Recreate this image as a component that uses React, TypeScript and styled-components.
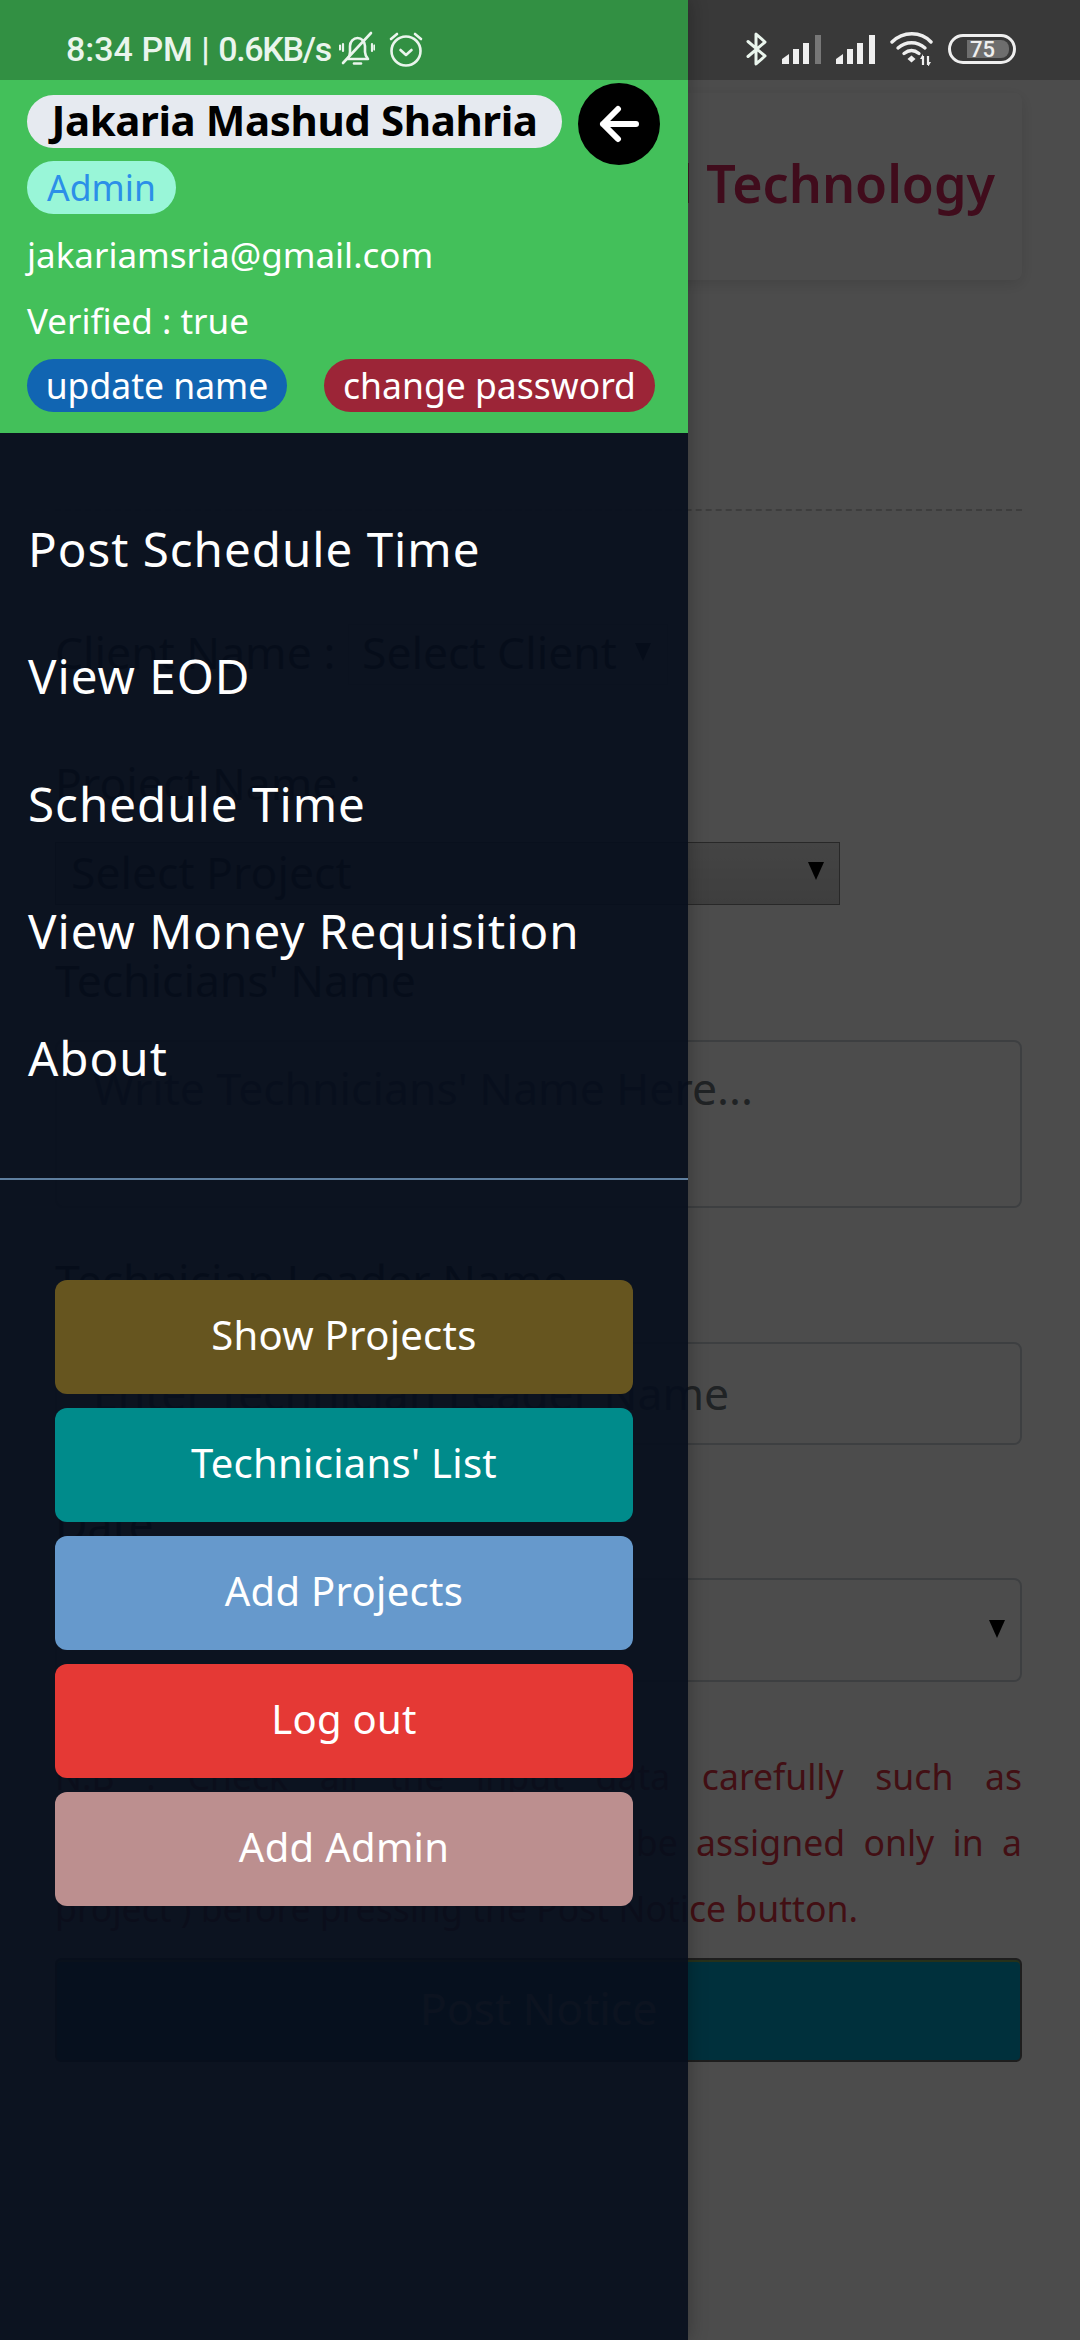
import React from "react";
import styled, { createGlobalStyle } from "styled-components";

const GlobalStyle = createGlobalStyle`
  html, body {
    margin: 0;
    padding: 0;
    background: #4c4c4c;
  }
  * {
    box-sizing: border-box;
  }
`;

const FONT = `"Noto Sans", "Open Sans", sans-serif`;

const Screen = styled.div`
  position: relative;
  width: 1080px;
  height: 2340px;
  overflow: hidden;
  font-family: ${FONT};
  background: #fff;
`;

/* page behind the drawer */
const Page = styled.main`
  padding: 93px 58px 0 55px;
  height: 100%;
  color: #212529;
`;

const TitleCard = styled.div`
  height: 187px;
  display: flex;
  align-items: center;
  justify-content: flex-end;
  padding-right: 27px;
  padding-bottom: 8px;
  border-radius: 8px;
  box-shadow: 0 4px 16px rgba(0, 0, 0, 0.12);
  font-size: 52px;
  font-weight: 600;
  color: #d6285f;
`;

const Dashed = styled.hr`
  margin: 229px 0 0;
  border: 0;
  border-top: 2px dashed #ccc;
`;

const ClientRow = styled.div`
  margin-top: 113px;
  display: flex;
  align-items: center;
  height: 61px;
`;

const Label = styled.div`
  font-size: 44.5px;
  line-height: 60px;
  white-space: nowrap;
`;

const ClientLabel = styled(Label)`
  flex: 0 0 293px;
  padding-bottom: 6px;
`;

const SmallSelect = styled.div`
  width: 320px;
  height: 61px;
  padding: 0 16px 6px 13px;
  display: flex;
  align-items: center;
  justify-content: space-between;
  border: 1px solid #ddd;
  font-size: 44.5px;
  white-space: nowrap;
`;

const Caret = styled.span`
  flex: none;
  width: 0;
  height: 0;
  border-left: 8px solid transparent;
  border-right: 8px solid transparent;
  border-top: 18px solid #000;
`;

const LabelBlock = styled(Label)<{ $top: number }>`
  margin-top: ${(p) => p.$top}px;
`;

const GreySelect = styled.div`
  margin-top: 29px;
  width: 785px;
  height: 63px;
  padding: 0 15px 5px;
  display: flex;
  align-items: center;
  justify-content: space-between;
  border: 1px solid #888;
  background: linear-gradient(#e4e4e4, #d0d0d0);
  font-size: 44.5px;
`;

const Field = styled.div<{ $h: number; $top: number }>`
  margin-top: ${(p) => p.$top}px;
  height: ${(p) => p.$h}px;
  padding: 0 15px 3px 36px;
  display: flex;
  align-items: center;
  justify-content: space-between;
  border: 2px solid #ced4da;
  border-radius: 8px;
  font-size: 44.5px;
  color: #6c757d;
  white-space: nowrap;
`;

const TextArea = styled(Field)`
  align-items: flex-start;
  padding-top: 15px;
`;

const Note = styled.p`
  margin: 61px 0 0;
  font-size: 35.6px;
  line-height: 66px;
  text-align: justify;
  color: #dc3545;
`;

const PostButton = styled.div`
  margin-top: 17px;
  height: 104px;
  padding-bottom: 5px;
  display: flex;
  align-items: center;
  justify-content: center;
  border-radius: 6px;
  border: 2px solid #666;
  box-shadow: inset 0 2px 0 #7fa35c;
  background: #00a0c8;
  color: #fff;
  font-size: 44.5px;
`;

const Scrim = styled.div`
  position: absolute;
  inset: 0;
  background: rgba(0, 0, 0, 0.7);
`;

/* status bar lies over drawer and page */
const StatusBar = styled.div`
  position: absolute;
  top: 0;
  left: 0;
  right: 0;
  height: 80px;
  z-index: 3;
  padding: 18px 64px 0 66px;
  display: flex;
  align-items: center;
  justify-content: space-between;
  background: rgba(0, 0, 0, 0.25);
  color: #eaf5ed;
`;

const StatusGroup = styled.div<{ $gap: number }>`
  display: flex;
  align-items: center;
  gap: ${(p) => p.$gap}px;
`;

const StatusText = styled.span`
  margin-right: -6px;
  font-family: Roboto, sans-serif;
  font-size: 34px;
  font-weight: 500;
  white-space: nowrap;
`;

const Speed = styled.span`
  letter-spacing: -1.3px;
`;

const Drawer = styled.aside`
  position: absolute;
  top: 0;
  left: 0;
  bottom: 0;
  width: 688px;
  z-index: 2;
  background: rgba(6, 14, 28, 0.92);
  box-shadow: 0 0 18px rgba(0, 0, 0, 0.3);
  color: #fff;
`;

const Profile = styled.header`
  position: relative;
  height: 433px;
  padding: 95px 0 0 27px;
  background: #43c05a;
`;

const Pill = styled.span<{ $bg: string; $fg: string; $w: number }>`
  display: inline-flex;
  align-items: center;
  justify-content: center;
  width: ${(p) => p.$w}px;
  height: 53px;
  padding-bottom: 2px;
  border-radius: 27px;
  background: ${(p) => p.$bg};
  color: ${(p) => p.$fg};
  font-size: 35.5px;
  white-space: nowrap;
`;

const NamePill = styled(Pill)`
  padding-bottom: 4px;
  font-size: 42px;
  font-weight: 700;
  letter-spacing: -0.4px;
`;

const RoleRow = styled.div`
  margin-top: 13px;
  display: flex;
`;

const BackButton = styled.button`
  position: absolute;
  top: 83px;
  left: 578px;
  width: 82px;
  height: 82px;
  padding: 0;
  display: flex;
  align-items: center;
  justify-content: center;
  border: 0;
  border-radius: 50%;
  background: #000;
`;

const ProfileLine = styled.div<{ $top: number }>`
  margin-top: ${(p) => p.$top}px;
  font-size: 35px;
  line-height: 48px;
  color: #fff;
`;

const ProfileActions = styled.div`
  margin-top: 14px;
  display: flex;
  gap: 37px;
`;

const Menu = styled.nav`
  height: 747px;
  padding-top: 52px;
  border-bottom: 2px solid #5f7f9f;
`;

const MenuItem = styled.div`
  height: 127.3px;
  display: flex;
  align-items: center;
  padding-left: 28px;
  font-size: 47.5px;
  letter-spacing: 1px;
  color: #fff;
`;

const ActionList = styled.div`
  padding: 100px 55px 0;
  display: flex;
  flex-direction: column;
  gap: 14px;
`;

const ActionButton = styled.div<{ $bg: string }>`
  height: 114px;
  padding-bottom: 6px;
  display: flex;
  align-items: center;
  justify-content: center;
  border-radius: 12px;
  background: ${(p) => p.$bg};
  color: #fff;
  font-size: 40px;
  letter-spacing: 0.3px;
`;

const BellOff = () => (
  <svg width="36" height="36" viewBox="0 0 36 36" fill="none" stroke="currentColor" strokeWidth="2.6" strokeLinecap="round" strokeLinejoin="round">
    <path d="M9 28h20c-2-2.500-3-4-3-7v-6c0-4.500-3.200-8-7.500-8C14.500 7 11 10.500 11 15v6c0 3-.8 4.500-2 7Z" />
    <path d="M15 32.500h7" />
    <path d="M4 13v7M1 14.500v4M33 13v7M35.500 14.500v4" strokeWidth="2.2" />
    <path d="M4 32 32 2" />
  </svg>
);

const AlarmClock = () => (
  <svg width="34" height="36" viewBox="0 0 34 36" fill="none" stroke="currentColor" strokeWidth="2.6" strokeLinecap="round" strokeLinejoin="round">
    <circle cx="17" cy="20" r="14.500" />
    <path d="M11.500 19l5.500 5 5.500-5" />
    <path d="M2 8l6-5M32 8l-6-5" />
  </svg>
);

const Bluetooth = () => (
  <svg width="22" height="34" viewBox="0 0 22 34" fill="none" stroke="currentColor" strokeWidth="3" strokeLinecap="round" strokeLinejoin="round">
    <path d="M2 9.500 19 24 10 32V2l9 8L2 24.500" />
  </svg>
);

const Signal = ({ last }: { last: string }) => (
  <svg width="40" height="29" viewBox="0 0 40 29" fill="#efefef">
    <path d="M0 29V24l7-5v10Z" />
    <rect x="11" y="14" width="6" height="15" />
    <rect x="21" y="8" width="6" height="21" />
    <rect x="33" y="0" width="6" height="29" fill={last} />
  </svg>
);

const Wifi = () => (
  <svg width="44" height="34" viewBox="0 0 44 34" fill="none" stroke="#efefef" strokeWidth="3.4" strokeLinecap="round">
    <path d="M2 10C13 -1 31 -1 41 10" />
    <path d="M8 16c8-7 19-7 27 0" />
    <path d="M14 21.500c5-4 10-4 15 0" />
    <path d="M21.500 23.500l4 3.500-4 3.500-4-3.500Z" fill="#efefef" stroke="none" />
    <path d="M33 24v9M38 24v9" strokeWidth="2.200" strokeLinecap="butt" />
    <path d="M33 22l-3 5h3ZM38 35l3-5h-3Z" fill="#efefef" stroke="none" />
  </svg>
);

const BatteryFrame = styled.div`
  width: 68px;
  height: 30px;
  padding: 3px 4px 3px 16px;
  border: 3px solid #efefef;
  border-radius: 15px;
`;

const BatteryFill = styled.div`
  width: 100%;
  height: 100%;
  padding-left: 3px;
  display: flex;
  align-items: center;
  border-radius: 0 8px 8px 0;
  background: #6e6e6e;
  font-family: Roboto, sans-serif;
  font-size: 22px;
  font-weight: 500;
  color: #efefef;
`;

const menuItems = ["Post Schedule Time", "View EOD", "Schedule Time", "View Money Requisition", "About"];

const actions = [
  { label: "Show Projects", color: "#66551f" },
  { label: "Technicians' List", color: "#008b8b" },
  { label: "Add Projects", color: "#6699cc" },
  { label: "Log out", color: "#e53935" },
  { label: "Add Admin", color: "#bc8f8f" },
];

const App: React.FC = () => {
  return (
    <Screen>
      <GlobalStyle />
      <Page>
        <TitleCard>and Technology</TitleCard>
        <Dashed />
        <ClientRow>
          <ClientLabel>Client Name :</ClientLabel>
          <SmallSelect>
            Select Client <Caret />
          </SmallSelect>
        </ClientRow>
        <LabelBlock $top={68}>Project Name :</LabelBlock>
        <GreySelect>
          Select Project <Caret />
        </GreySelect>
        <LabelBlock $top={45}>Techicians' Name</LabelBlock>
        <TextArea $h={168} $top={30}>Write Technicians' Name Here...</TextArea>
        <LabelBlock $top={42}>Technician Leader Name</LabelBlock>
        <Field $h={103} $top={32}>Enter Technician Leader Name</Field>
        <LabelBlock $top={49}>Date</LabelBlock>
        <Field $h={104} $top={24}>
          <span />
          <Caret />
        </Field>
        <Note>
          N.B : Check all the input data carefully such as technicians' name and date can be assigned only in a project ) before pressing the Post Notice button.
        </Note>
        <PostButton>Post Notice</PostButton>
      </Page>
      <Scrim />
      <StatusBar>
        <StatusGroup $gap={14}>
          <StatusText>
            8:34 PM | <Speed>0.6KB/s</Speed>
          </StatusText>
          <BellOff />
          <AlarmClock />
        </StatusGroup>
        <StatusGroup $gap={14}>
          <Bluetooth />
          <Signal last="#777" />
          <Signal last="#efefef" />
          <Wifi />
          <BatteryFrame>
            <BatteryFill>75</BatteryFill>
          </BatteryFrame>
        </StatusGroup>
      </StatusBar>
      <Drawer>
        <Profile>
          <NamePill $bg="#e6eaf0" $fg="#000" $w={535}>Jakaria Mashud Shahria</NamePill>
          <BackButton aria-label="back">
            <svg width="40" height="38" viewBox="0 0 40 38" fill="none" stroke="#fff" strokeWidth="6" strokeLinecap="round" strokeLinejoin="round">
              <path d="M37 19H4M19 4 4 19l15 15" />
            </svg>
          </BackButton>
          <RoleRow>
            <Pill $bg="#99f6d8" $fg="#2b8fe8" $w={149}>Admin</Pill>
          </RoleRow>
          <ProfileLine $top={17}>jakariamsria@gmail.com</ProfileLine>
          <ProfileLine $top={18}>Verified : true</ProfileLine>
          <ProfileActions>
            <Pill $bg="#1165b2" $fg="#fff" $w={260}>update name</Pill>
            <Pill $bg="#9c2537" $fg="#fff" $w={331}>change password</Pill>
          </ProfileActions>
        </Profile>
        <Menu>
          {menuItems.map((item) => (
            <MenuItem key={item}>{item}</MenuItem>
          ))}
        </Menu>
        <ActionList>
          {actions.map((a) => (
            <ActionButton key={a.label} $bg={a.color}>{a.label}</ActionButton>
          ))}
        </ActionList>
      </Drawer>
    </Screen>
  );
};

export default App;
